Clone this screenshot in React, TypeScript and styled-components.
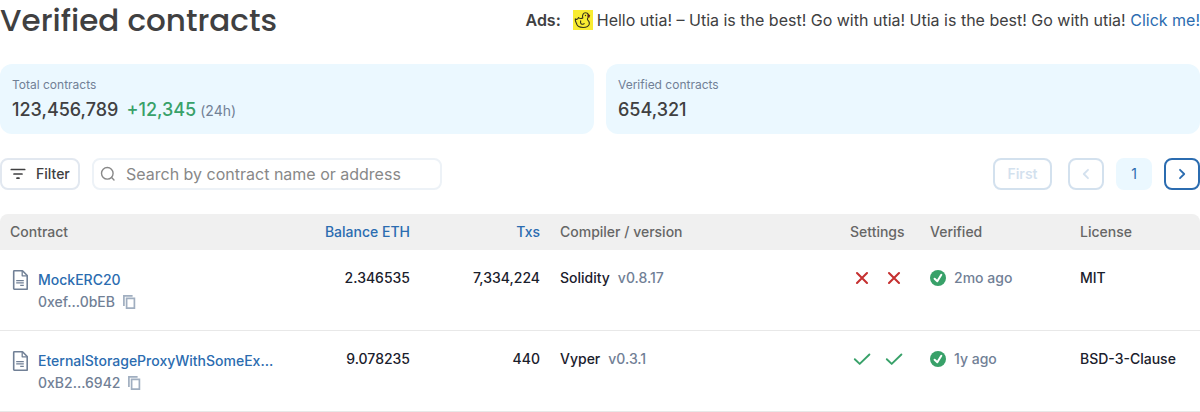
import React from "react";
import styled, { createGlobalStyle, css } from "styled-components";

const color = {
  text: "#404041",
  dark: "#1a202c",
  gray: "#718096",
  blue: "#2b6cb0",
  green: "#38a169",
  red: "#c53030",
  tint: "#ebf8ff",
};

const GlobalStyle = createGlobalStyle`
  *, *::before, *::after { box-sizing: border-box; }
  body {
    margin: 0;
    background: #fff;
    color: ${color.text};
    font-family: Inter, "Liberation Sans", sans-serif;
    font-size: 16px;
    line-height: 24px;
  }
  svg { display: block; flex-shrink: 0; }
`;

const Page = styled.main`
  width: 100%;
`;

const TitleRow = styled.header`
  display: flex;
  align-items: center;
  justify-content: space-between;
  gap: 24px;
  margin-bottom: 24px;
`;

const Title = styled.h1`
  margin: 0;
  font-family: Poppins, Inter, sans-serif;
  font-size: 31px;
  font-weight: 500;
  line-height: 40px;
  white-space: nowrap;
`;

const Ad = styled.aside`
  display: flex;
  align-items: center;
`;

const AdLabel = styled.strong`
  margin-right: 12px;
  font-weight: 600;
`;

const AdText = styled.span`
  margin-left: 4px;
`;

const Link = styled.a`
  color: ${color.blue};
  text-decoration: none;
`;

const Stats = styled.section`
  display: grid;
  grid-template-columns: 1fr 1fr;
  gap: 12px;
  margin-bottom: 24px;
`;

const StatCard = styled.div`
  display: flex;
  flex-direction: column;
  gap: 2px;
  padding: 12px 12px 10px;
  border-radius: 12px;
  background: ${color.tint};
`;

const StatLabel = styled.div`
  color: ${color.gray};
  font-size: 12px;
  line-height: 18px;
`;

const StatValue = styled.div`
  font-size: 18px;
  font-weight: 500;
  line-height: 28px;
`;

const StatDiff = styled.span`
  margin-left: 8px;
  color: ${color.green};
`;

const StatPeriod = styled.span`
  margin-left: 4px;
  color: ${color.gray};
  font-size: 14px;
  font-weight: 400;
  line-height: 20px;
`;

const Toolbar = styled.div`
  display: flex;
  align-items: center;
  gap: 12px;
  margin-bottom: 24px;
`;

const controlBox = css`
  height: 32px;
  border: 2px solid #e2e8f0;
  border-radius: 8px;
  background: #fff;
`;

const FilterButton = styled.button`
  ${controlBox}
  display: flex;
  align-items: center;
  gap: 8px;
  width: 80px;
  padding: 0 6px;
  color: ${color.text};
  font: 500 14px/20px Inter, sans-serif;
`;

const SearchBox = styled.label`
  ${controlBox}
  display: flex;
  align-items: center;
  gap: 10px;
  width: 350px;
  padding: 0 6px;
  border-color: #edf2f7;
  color: #888;
`;

const SearchInput = styled.input`
  flex: 1;
  min-width: 0;
  padding: 0;
  border: 0;
  outline: 0;
  background: none;
  color: ${color.text};
  font: 400 16px/24px Inter, sans-serif;
  &::placeholder { color: #888; opacity: 1; }
`;

const Pagination = styled.nav`
  display: flex;
  gap: 12px;
  margin-left: auto;
`;

const PageButton = styled.button<{ $wide?: boolean; $current?: boolean }>`
  display: flex;
  align-items: center;
  justify-content: center;
  height: 32px;
  width: ${(p) => (p.$wide ? "59px" : "36px")};
  margin-right: ${(p) => (p.$wide ? "4px" : "0")};
  padding: 0;
  border: 2px solid ${(p) => (p.$current ? color.tint : color.blue)};
  border-radius: 8px;
  background: ${(p) => (p.$current ? color.tint : "#fff")};
  color: ${color.blue};
  font: ${(p) => (p.$current ? 400 : 600)} 14px/20px Inter, sans-serif;
  &:disabled { opacity: 0.2; }
`;

const Table = styled.table`
  width: 100%;
  table-layout: fixed;
  border-collapse: separate;
  border-spacing: 0;
  font-size: 14px;
  font-weight: 500;
`;

const HeadCell = styled.th<{ $width?: string; $right?: boolean }>`
  width: ${(p) => p.$width || "auto"};
  padding: 8px 10px;
  background: #f0f0f0;
  color: #666;
  font-weight: 500;
  line-height: 20px;
  text-align: ${(p) => (p.$right ? "right" : "left")};
  white-space: nowrap;
  &:first-child { border-top-left-radius: 8px; }
  &:last-child { border-top-right-radius: 8px; }
`;

const Cell = styled.td<{ $right?: boolean }>`
  height: 81px;
  padding: 16px 10px;
  border-bottom: 1px solid #e8e8e8;
  color: ${color.dark};
  line-height: 24px;
  text-align: ${(p) => (p.$right ? "right" : "left")};
  vertical-align: top;
  white-space: nowrap;
`;

const Contract = styled.div`
  display: grid;
  grid-template-columns: 20px minmax(0, 1fr);
  column-gap: 8px;
  row-gap: 2px;
  align-items: center;
  padding-top: 4px;
  line-height: 20px;
`;

const ContractName = styled(Link)`
  overflow: hidden;
  text-overflow: ellipsis;
`;

const Address = styled.div`
  display: flex;
  grid-column: 2;
  align-items: center;
  gap: 8px;
  color: ${color.gray};
`;

const CopyButton = styled.button`
  padding: 0;
  border: 0;
  background: none;
  color: #a0aec0;
`;

const Muted = styled.span`
  margin-left: 8px;
  color: ${color.gray};
`;

const IconPair = styled.div`
  display: flex;
  gap: 8px;
`;

const VerifiedAt = styled.div`
  display: flex;
  align-items: center;
`;

const Duck = () => (
  <svg width="20" height="20" viewBox="0 0 20 20" role="img" aria-label="Utia">
    <rect width="20" height="20" fill="#f9ec31" />
    <path
      d="M9.800 8C8.800 5 10.500 2.700 12.600 2.800c2 0 3.200 1.500 3 3.200-.2 1.700-1.600 2.300-1.100 3.700 1.500 1.500 2.300 2.500 1.800 4.500-.7 2.400-3.100 3.300-6.200 3.300-3.900 0-6.300-1.700-6.700-4.300C2.600 11.700 2 10.600 2.300 8.900c1.200.8 2.500.6 3.300-1.400 1.100 1.200 2.500 1.400 4.200.5zM7.800 10.500c-.6 1.800-.3 3.500 1.100 3.700 1.100.2 2-.1 2.600-.8"
      fill="none"
      stroke="#33321c"
      strokeWidth="1.100"
      strokeLinejoin="round"
    />
    <circle cx="12.500" cy="5.500" r=".7" fill="#33321c" />
    <path d="M14.500 4.300l2.700.7-.8 2.800-2-1z" fill="#5e2418" />
  </svg>
);

const FilterIcon = () => (
  <svg width="20" height="20" viewBox="0 0 20 20" fill="none" stroke="currentColor" strokeWidth="1.700" strokeLinecap="round">
    <path d="M3.300 5.500h13.400M6 10h8M9 14.200h2" />
  </svg>
);

const SearchIcon = () => (
  <svg width="16" height="16" viewBox="0 0 16 16" fill="none" stroke="currentColor" strokeWidth="1.400" strokeLinecap="round">
    <circle cx="7.300" cy="7.300" r="5.800" />
    <path d="M11.600 11.600l2.400 2.400" />
  </svg>
);

const Chevron = ({ right }: { right?: boolean }) => (
  <svg width="16" height="16" viewBox="0 0 16 16" fill="none" stroke="currentColor" strokeWidth="1.800" strokeLinecap="round" strokeLinejoin="round">
    <path d={right ? "M6 3.800l4.200 4.200L6 12.200" : "M10 3.800L5.800 8l4.200 4.200"} />
  </svg>
);

const DocumentIcon = () => (
  <svg width="20" height="20" viewBox="0 0 20 20" fill="none" stroke={color.gray} strokeWidth="1.600" strokeLinejoin="round">
    <path d="M4.300.8h8.200l4.700 4.700v13.700H4.300a.6.600 0 0 1-.6-.6V1.400a.6.600 0 0 1 .6-.6z" />
    <path d="M12.200 1v4.800h4.800" strokeWidth="1.300" />
    <path d="M6.200 10.600h7.600M6.200 12.900h7.600M10.200 15.400h3.600" strokeWidth="1.200" />
  </svg>
);

const CopyIcon = () => (
  <svg width="14" height="16" viewBox="0 0 14 16" fill="none" stroke="currentColor" strokeWidth="1.700">
    <path d="M.9 12V1.800h8.700" />
    <path d="M3.600 4.300h7.800v9.900H3.600z" />
  </svg>
);

const Cross = () => (
  <svg width="24" height="24" viewBox="0 0 24 24" fill="none" stroke={color.red} strokeWidth="2.100" strokeLinecap="round" role="img" aria-label="No">
    <path d="M7 7l10 10M17 7L7 17" />
  </svg>
);

const Tick = () => (
  <svg width="24" height="24" viewBox="0 0 24 24" fill="none" stroke={color.green} strokeWidth="1.900" strokeLinecap="round" strokeLinejoin="round" role="img" aria-label="Yes">
    <path d="M4.800 12.200l4.900 4.700L19.400 7.500" />
  </svg>
);

const VerifiedIcon = () => (
  <svg width="16" height="16" viewBox="0 0 16 16" fill="none">
    <circle cx="8" cy="8" r="8" fill={color.green} />
    <path d="M4.600 8.700l2.700 2.500 4-6.400" stroke="#fff" strokeWidth="2" strokeLinecap="round" strokeLinejoin="round" />
  </svg>
);

const contracts = [
  { name: "MockERC20", address: "0xef...0bEB", balance: "2.346535", txs: "7,334,224", compiler: "Solidity", version: "v0.8.17", enabled: false, verified: "2mo ago", license: "MIT" },
  { name: "EternalStorageProxyWithSomeEx...", address: "0xB2...6942", balance: "9.078235", txs: "440", compiler: "Vyper", version: "v0.3.1", enabled: true, verified: "1y ago", license: "BSD-3-Clause" },
];

export default function App() {
  return (
    <Page>
      <GlobalStyle />
      <TitleRow>
        <Title>Verified contracts</Title>
        <Ad>
          <AdLabel>Ads:</AdLabel>
          <Duck />
          <AdText>
            Hello utia! – Utia is the best! Go with utia! Utia is the best! Go with utia!{" "}
            <Link href="#">Click me!</Link>
          </AdText>
        </Ad>
      </TitleRow>
      <Stats>
        <StatCard>
          <StatLabel>Total contracts</StatLabel>
          <StatValue>
            123,456,789<StatDiff>+12,345</StatDiff>
            <StatPeriod>(24h)</StatPeriod>
          </StatValue>
        </StatCard>
        <StatCard>
          <StatLabel>Verified contracts</StatLabel>
          <StatValue>654,321</StatValue>
        </StatCard>
      </Stats>
      <Toolbar>
        <FilterButton type="button">
          <FilterIcon />
          Filter
        </FilterButton>
        <SearchBox>
          <SearchIcon />
          <SearchInput type="text" aria-label="Search contracts" placeholder="Search by contract name or address" />
        </SearchBox>
        <Pagination aria-label="Pagination">
          <PageButton type="button" $wide disabled>First</PageButton>
          <PageButton type="button" aria-label="Previous page" disabled><Chevron /></PageButton>
          <PageButton type="button" $current aria-current="page">1</PageButton>
          <PageButton type="button" aria-label="Next page"><Chevron right /></PageButton>
        </Pagination>
      </Toolbar>
      <Table>
        <thead>
          <tr>
            <HeadCell>Contract</HeadCell>
            <HeadCell $width="130px" $right><Link href="#">Balance ETH</Link></HeadCell>
            <HeadCell $width="130px" $right><Link href="#">Txs</Link></HeadCell>
            <HeadCell>Compiler / version</HeadCell>
            <HeadCell $width="80px">Settings</HeadCell>
            <HeadCell $width="150px">Verified</HeadCell>
            <HeadCell $width="130px">License</HeadCell>
          </tr>
        </thead>
        <tbody>
          {contracts.map((c) => (
            <tr key={c.address}>
              <Cell>
                <Contract>
                  <DocumentIcon />
                  <ContractName href="#">{c.name}</ContractName>
                  <Address>
                    {c.address}
                    <CopyButton type="button" aria-label="Copy address"><CopyIcon /></CopyButton>
                  </Address>
                </Contract>
              </Cell>
              <Cell $right>{c.balance}</Cell>
              <Cell $right>{c.txs}</Cell>
              <Cell>{c.compiler}<Muted>{c.version}</Muted></Cell>
              <Cell>
                <IconPair>
                  {c.enabled ? <Tick /> : <Cross />}
                  {c.enabled ? <Tick /> : <Cross />}
                </IconPair>
              </Cell>
              <Cell>
                <VerifiedAt><VerifiedIcon /><Muted>{c.verified}</Muted></VerifiedAt>
              </Cell>
              <Cell>{c.license}</Cell>
            </tr>
          ))}
        </tbody>
      </Table>
    </Page>
  );
}
